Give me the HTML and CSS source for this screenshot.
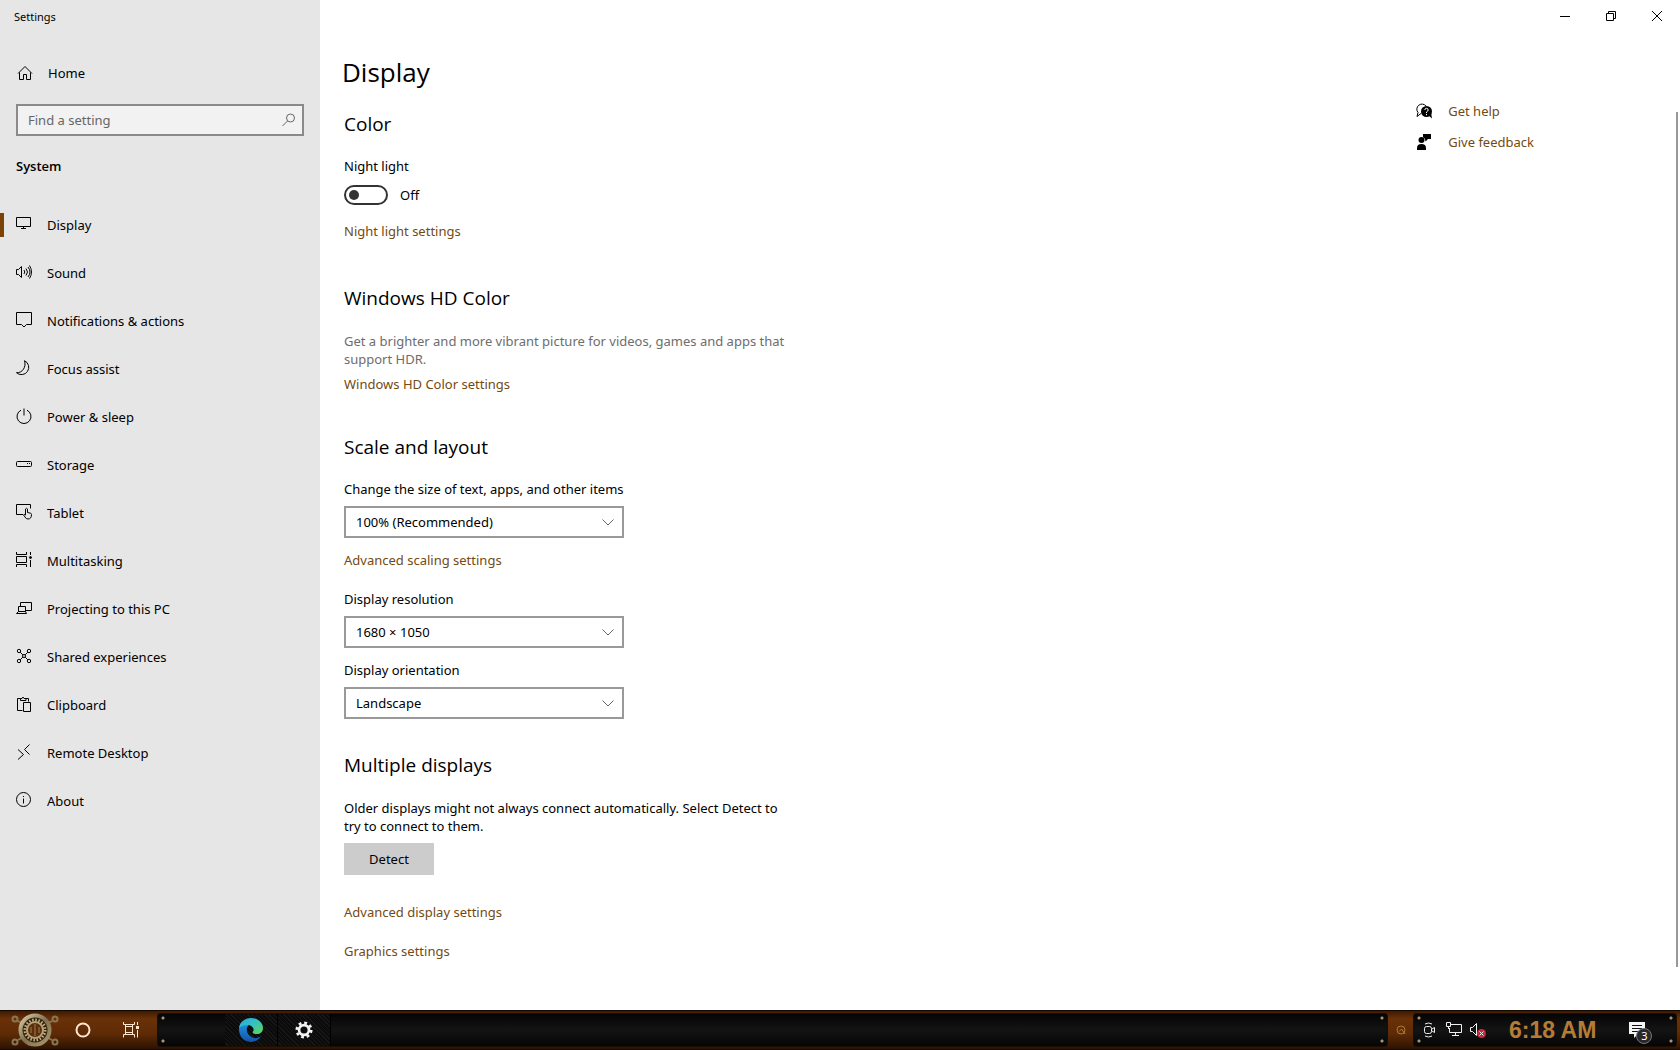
FILE: index.html
```html
<!DOCTYPE html>
<html lang="en">
<head>
    <meta charset="UTF-8">
    <meta name="viewport" content="width=device-width, initial-scale=1.0">
    <title>Settings</title>
    <link rel="stylesheet" href="styles.css">
</head>
<body>

    <div class="window">
        <!-- Sidebar -->
        <aside class="sidebar">
            <div class="app-title">Settings</div>
            <a class="home" href="#">
                <svg class="icon" viewBox="0 0 16 16"><path d="M1 8.500 8 1.500l7 7M2.500 7.500v7h4V9.500h3v5h4v-7"/></svg>
                Home
            </a>
            <div class="search">
                <input type="text" placeholder="Find a setting" aria-label="Find a setting">
                <svg class="icon" viewBox="0 0 16 16"><circle cx="9.500" cy="6" r="4"/><path d="m6.500 9-5 5"/></svg>
            </div>
            <h2 class="group">System</h2>
            <nav class="nav">
                <a class="active" href="#"><svg class="icon" viewBox="0 0 16 16"><path d="M.5 1.500h14v9H.5zM7.500 10.500v2M5 12.500h5"/></svg>Display</a>
                <a href="#"><svg class="icon" viewBox="0 0 16 16"><path d="M.5 5.500h2l3-3v11l-3-3h-2zM8 6q1.500 2 0 4M10 4.500q3 3.500 0 7M12 3q4 5 0 10M13.500 1.500q4 6.500 0 13"/></svg>Sound</a>
                <a href="#"><svg class="icon" viewBox="0 0 16 16"><path d="M.5.500h15v12h-5L8 15l-2.500-2.500h-5z"/></svg>Notifications &amp; actions</a>
                <a href="#"><svg class="icon" viewBox="0 0 16 16"><path d="M8.500.700a7.300 7.300 0 1 1-8 12c6 .5 10-6 8-12z"/></svg>Focus assist</a>
                <a href="#"><svg class="icon" viewBox="0 0 16 16"><path d="M5 2.200a7 7 0 1 0 6 0M8 .5v7"/></svg>Power &amp; sleep</a>
                <a href="#"><svg class="icon" viewBox="0 0 16 16"><rect x=".5" y="5.500" width="15" height="5" rx="1"/><path d="M11 7.500h1M13 7.500h1"/></svg>Storage</a>
                <a href="#"><svg class="icon" viewBox="0 0 16 16"><path d="M7 10.500H.5v-10h14v4M9.500 11V5q1-1.500 2 0v3.500l3 .7q1 .3 1 1.300 0 4.500-3.500 4.500-2 0-3-2l-1.500-2q.5-1.500 2 0z"/></svg>Tablet</a>
                <a href="#"><svg class="icon" viewBox="0 0 16 16"><path d="M.5 0v2.500h10V0M.5 4.500h10v6H.5zM.5 15v-2.500h10V15M14.500 0v3M14.500 8v7"/><circle cx="14.500" cy="5.500" r="1" fill="currentColor"/></svg>Multitasking</a>
                <a href="#"><svg class="icon" viewBox="0 0 16 16"><path d="M4.500 6V2.500h11v8H10M2.500 6.500h7v5h-7zM.5 13.500l2-2h7l1 2z"/></svg>Projecting to this PC</a>
                <a href="#"><svg class="icon" viewBox="0 0 16 16"><circle cx="3" cy="3" r="1.700"/><circle cx="13" cy="3" r="1.700"/><circle cx="3" cy="13" r="1.700"/><circle cx="13" cy="13" r="1.700"/><circle cx="8" cy="8" r="1.500"/><path d="m4.200 4.200 2.700 2.700M11.800 4.200 9.100 6.900M4.200 11.800l2.700-2.700M11.800 11.800 9.100 9.100"/></svg>Shared experiences</a>
                <a href="#"><svg class="icon" viewBox="0 0 16 16"><path d="M6.500 14.500h-5v-12h3M9.500 2.500h3v3M4.500 4.500v-2h1.500q1-3 2 0h2v2zM7.500 6.500h7v9h-7z"/></svg>Clipboard</a>
                <a href="#"><svg class="icon" viewBox="0 0 16 16"><path d="M2 5.500 7.500 10.500 2 15.500M13.500.500l-5 5 5 5"/></svg>Remote Desktop</a>
                <a href="#"><svg class="icon" viewBox="0 0 16 16"><circle cx="7.500" cy="7.500" r="7"/><path d="M7.500 6.500v5M7.500 4v1"/></svg>About</a>
            </nav>
        </aside>

        <!-- Page -->
        <main class="page">
            <div class="caption">
                <button aria-label="Minimize"><svg viewBox="0 0 10 10"><path d="M0 5.500h10"/></svg></button>
                <button aria-label="Restore"><svg viewBox="0 0 10 10"><path d="M.5 2.500h7v7h-7zM2.500 2.500v-2h7v7h-2"/></svg></button>
                <button aria-label="Close"><svg viewBox="0 0 10 10"><path d="m0 0 10 10M10 0 0 10"/></svg></button>
            </div>
            <h1>Display</h1>
            <div class="columns">
                <div class="content">
                    <section>
                        <h2>Color</h2>
                        <label for="night">Night light</label>
                        <div class="toggle">
                            <input type="checkbox" id="night" role="switch">
                            <span>Off</span>
                        </div>
                        <a href="#">Night light settings</a>
                    </section>
                    <section class="hd">
                        <h2>Windows HD Color</h2>
                        <p class="muted">Get a brighter and more vibrant picture for videos, games and apps that support HDR.</p>
                        <a href="#">Windows HD Color settings</a>
                    </section>
                    <section class="scale">
                        <h2>Scale and layout</h2>
                        <label for="size">Change the size of text, apps, and other items</label>
                        <select id="size"><option>100% (Recommended)</option></select>
                        <a href="#">Advanced scaling settings</a>
                        <label for="resolution">Display resolution</label>
                        <select id="resolution"><option>1680 × 1050</option></select>
                        <label for="orientation">Display orientation</label>
                        <select id="orientation"><option>Landscape</option></select>
                    </section>
                    <section class="multiple">
                        <h2>Multiple displays</h2>
                        <p>Older displays might not always connect automatically. Select Detect to try to connect to them.</p>
                        <button class="detect">Detect</button>
                        <a href="#">Advanced display settings</a>
                        <a href="#">Graphics settings</a>
                    </section>
                </div>
                <div class="help">
                    <a href="#">
                        <svg viewBox="0 0 16 16"><path d="M5 10.500 1 13.500l1-4A5 5 0 1 1 10 3" fill="none" stroke="#000"/><circle cx="10.500" cy="8.500" r="5.500"/><path d="m12 12 4 3.500-1-6z"/><path d="M8.800 7q0-1.700 1.700-1.700T12.200 7q0 1-1.700 2v1M10.500 11v1.200" fill="none" stroke="#fff"/></svg>
                        Get help
                    </a>
                    <a href="#">
                        <svg viewBox="0 0 16 16"><path d="M7 0h8v5h-3L9.500 7.500 9 5 7 3z"/><circle cx="5.500" cy="6" r="3"/><path d="M1 16v-2q0-4 4.500-4t4.500 4v2z"/></svg>
                        Give feedback
                    </a>
                </div>
                <div class="scrollbar"></div>
            </div>
        </main>
    </div>

    <!-- Taskbar -->
    <footer class="taskbar">
        <button class="start" aria-label="Start">
            <svg viewBox="0 0 48 34">
                <defs>
                    <linearGradient id="brass" x1="0" y1="0" x2="1" y2="1"><stop offset="0" stop-color="#d8cba8"/><stop offset=".5" stop-color="#80704e"/><stop offset="1" stop-color="#a89870"/></linearGradient>
                </defs>
                <g stroke="#8a7650" stroke-width="2"><path d="m7 8 34 19M7 27 41 8"/><circle cx="4" cy="6" r="2.500"/><circle cx="44" cy="6" r="2.500"/><circle cx="4" cy="29" r="2.500"/><circle cx="44" cy="29" r="2.500"/></g>
                <circle cx="24" cy="17" r="14.500" fill="#33200f" stroke="url(#brass)" stroke-width="4"/>
                <circle cx="24" cy="17" r="10" stroke="#c2b184" stroke-width="3" stroke-dasharray="1.500 1.640"/>
                <circle cx="24" cy="17" r="8" fill="#56300f" stroke="#b8a274" stroke-width="2"/>
                <path d="M24 11v12M20 14v6M28 14v6" stroke="#b07840"/>
            </svg>
        </button>
        <button class="cortana" aria-label="Search"><svg viewBox="0 0 16 16"><circle cx="8" cy="8" r="6.500"/></svg></button>
        <button class="taskview" aria-label="Task View"><svg viewBox="0 0 16 16"><path d="M.5 0v2.500h11V0M2.500 2.500v10M9.500 2.500v10M2 4.500h8M2 10.500h8M.5 15.500v-3h11v3M14.500 0v3M14.500 8v7.500"/><path d="M13 4h3v3h-3z" class="solid"/></svg></button>
        <div class="apps panel">
            <button class="app" aria-label="Edge">
                <svg viewBox="0 0 24 24">
                    <defs>
                        <linearGradient id="wave" x1="0" y1="0" x2="1" y2="1"><stop offset="0" stop-color="#2aa8e0"/><stop offset=".5" stop-color="#35c1c0"/><stop offset="1" stop-color="#63d84a"/></linearGradient>
                        <linearGradient id="deep" x1="0" y1="0" x2="0" y2="1"><stop offset="0" stop-color="#1f8fe0"/><stop offset="1" stop-color="#1253a8"/></linearGradient>
                    </defs>
                    <path fill="url(#deep)" d="M0 11C1 6 6 5 10 7c-3 2-3 7 0 10 4 4 8 4 12 1-3 5-8 7-13 5.500C3 22 0 17 0 11z"/>
                    <path fill="url(#wave)" d="M0 11C0 4 6 0 12 0c7 0 12 5 12 10 0 4-3 6-6 6-4 0-5-1-4-2.500C16 11 13 7 9 7c-4 0-8 1-9 4z"/>
                </svg>
            </button>
            <button class="app open" aria-label="Settings">
                <svg viewBox="0 0 20 20"><circle cx="10" cy="10" r="5.500" stroke="#f2f2f2" stroke-width="3"/><circle cx="10" cy="10" r="8" stroke="#f2f2f2" stroke-width="3" stroke-dasharray="3.140 3.140"/></svg>
            </button>
        </div>
        <button class="chevron" aria-label="Show hidden icons"><svg viewBox="0 0 12 12"><circle cx="6" cy="6" r="4"/><path d="M4 7.500 6.500 5 10 10"/></svg></button>
        <div class="tray panel">
            <svg class="tray-icon" viewBox="0 0 16 16"><rect x="2.500" y="4.500" width="7" height="7" rx="2"/><path d="m10 7 2.500-1.500v5L10 9M3 2q3.500-2 7 0M3 14q3.500 2 7 0"/></svg>
            <svg class="tray-icon" viewBox="0 0 16 16"><path d="M5 2.500h10.500v8H3.500V6M9.500 10.500v3M6 13.500h7M.5.500h4v4h-4zM2.500 4.500V7"/></svg>
            <svg class="tray-icon" viewBox="0 0 16 16"><path d="M.5 5.500h2l4-4v12l-4-4h-2z"/><circle cx="11.500" cy="11.500" r="4.500" class="mute"/><path d="m9.500 9.500 4 4M13.500 9.500l-4 4"/></svg>
            <time>6:18 AM</time>
            <button class="notify" aria-label="Notifications">
                <svg viewBox="0 0 16 16"><path fill="#f4f4f4" d="M0 0h16v12H9l-4 4v-4H0z"/><path stroke="#111" d="M3 3.500h10M3 6.500h10M3 9.500h6"/></svg>
                <span class="badge">3</span>
            </button>
        </div>
    </footer>

</body>
</html>
```
FILE: styles.css
```css
* {
    box-sizing: border-box;
}

body {
    margin: 0;
    min-height: 100vh;
    display: flex;
    flex-direction: column;
    font-family: "Noto Sans", "Open Sans", sans-serif;
    font-size: 13px;
    line-height: 18px;
    color: #000;
    background: #fff;
}

h1, h2, p {
    margin: 0;
    font-weight: normal;
}

a {
    color: #744a10;
    text-decoration: none;
}

button {
    padding: 0;
    border: 0;
    background: none;
    font: inherit;
    color: inherit;
}

.window {
    flex: 1;
    display: flex;
}

/* Sidebar */
.sidebar {
    width: 320px;
    background: #e6e6e6;
}

.sidebar a {
    color: #000;
}

.app-title {
    padding: 8px 14px;
    font-size: 11px;
}

.icon {
    width: 16px;
    height: 16px;
    fill: none;
    stroke: currentColor;
    flex: none;
}

.home {
    display: flex;
    align-items: center;
    gap: 15px;
    height: 40px;
    margin-top: 19px;
    padding-left: 17px;
}

.search {
    display: flex;
    align-items: center;
    height: 32px;
    margin: 11px 16px 0;
    padding: 0 5px 0 10px;
    border: 2px solid #8a8a8a;
    background: #f2f2f2;
    color: #666;
}

.search input {
    flex: 1;
    min-width: 0;
    padding: 0;
    border: 0;
    outline: 0;
    background: none;
    font: inherit;
}

.search input::placeholder {
    color: #666;
    opacity: 1;
}

.sidebar .group {
    margin: 21px 16px 26px;
    font-family: "Open Sans", sans-serif;
    font-size: 13px;
    font-weight: 600;
    line-height: 18px;
}

.nav a {
    display: flex;
    align-items: center;
    gap: 15px;
    height: 48px;
    padding-left: 16px;
}

.nav .icon {
    margin-bottom: 2px;
}

.nav .active {
    padding-left: 0;
}

.nav .active::before {
    content: "";
    width: 4px;
    height: 24px;
    margin-right: -3px;
    background: #7c4307;
}

/* Page */
.page {
    flex: 1;
    display: flex;
    flex-direction: column;
}

.caption {
    display: flex;
    justify-content: flex-end;
    height: 32px;
}

.caption button {
    width: 46px;
}

.caption svg {
    width: 10px;
    height: 10px;
    fill: none;
    stroke: #000;
}

h1, h2 {
    font-family: "Open Sans", sans-serif;
}

h1 {
    margin: 20px 0 0 22px;
    font-size: 26px;
    line-height: 40px;
}

h2 {
    margin-bottom: 19px;
    font-size: 19px;
    line-height: 28px;
}

.columns {
    flex: 1;
    display: flex;
    padding-left: 24px;
}

.content {
    width: 450px;
    padding: 18px 0 20px;
}

.content label,
.content section > a {
    display: block;
    width: fit-content;
}

.toggle {
    display: flex;
    align-items: center;
    gap: 12px;
    margin: 10px 0 17px;
}

.toggle input {
    appearance: none;
    width: 44px;
    height: 20px;
    margin: 0;
    padding: 3px;
    border: 2px solid #333;
    border-radius: 10px;
}

.toggle input::before {
    content: "";
    display: block;
    width: 10px;
    height: 10px;
    border-radius: 50%;
    background: #333;
}

.toggle input:checked::before {
    margin-left: auto;
}

.hd {
    margin-top: 44px;
}

.hd h2,
.multiple h2 {
    margin-bottom: 20px;
}

.hd p {
    margin-bottom: 7px;
}

.muted {
    color: #6d6d6d;
}

.scale {
    margin-top: 40px;
}

select {
    appearance: none;
    display: block;
    width: 280px;
    height: 32px;
    margin: 8px 0 13px;
    padding: 0 10px;
    border: 2px solid #999;
    border-radius: 0;
    background: #fff url("data:image/svg+xml,%3Csvg xmlns='http://www.w3.org/2000/svg' viewBox='0 0 12 7' fill='none' stroke='%23666'%3E%3Cpath d='m.5.5 5.500 5.500 5.500-5.500'/%3E%3C/svg%3E") no-repeat right 8px center / 12px 7px;
    font: inherit;
    color: #000;
}

.scale a {
    margin-bottom: 21px;
}

.multiple {
    margin-top: 32px;
}

.detect {
    display: block;
    width: 90px;
    height: 32px;
    margin: 8px 0 28px;
    background: #ccc;
}

.multiple a + a {
    margin-top: 21px;
}

.help {
    margin-left: auto;
    margin-right: 142px;
    padding-top: 10px;
}

.help a {
    display: flex;
    align-items: center;
    gap: 16px;
    margin-bottom: 13px;
}

.help svg {
    width: 16px;
    height: 16px;
}

.scrollbar {
    width: 2px;
    margin: 20px 2px 43px 0;
    background: #999;
}

/* Taskbar */
.taskbar {
    display: flex;
    align-items: center;
    height: 40px;
    border: 1px solid #140800;
    border-width: 1px 0;
    background: linear-gradient(#3c1a04, #6a3108 20%, #5e2b06 60%, #2c1202);
}

.taskbar svg {
    display: block;
    fill: none;
}

.start svg {
    width: 48px;
    height: 34px;
}

.start {
    margin-left: 11px;
}

.cortana,
.taskview {
    width: 48px;
}

.cortana svg,
.taskview svg {
    width: 16px;
    height: 16px;
    margin: 0 auto;
    stroke: #ffe6d0;
}

.cortana svg {
    stroke-width: 2;
}

.taskbar .solid {
    fill: #ffe6d0;
    stroke: none;
}

.panel {
    display: flex;
    align-items: center;
    height: 34px;
    border: 1px solid #1c0d03;
    border-radius: 3px;
    background:
        radial-gradient(circle at 5px 4px, #a89478 1px, transparent 2px),
        radial-gradient(circle at 5px 27px, #a89478 1px, transparent 2px),
        radial-gradient(circle at calc(100% - 5px) 4px, #a89478 1px, transparent 2px),
        radial-gradient(circle at calc(100% - 5px) 27px, #a89478 1px, transparent 2px),
        linear-gradient(#050505, #141414 50%, #050505);
}

.apps {
    flex: 1;
    margin-left: 2px;
    padding-left: 67px;
}

.app {
    width: 53px;
    height: 32px;
    border-right: 1px solid #000;
    background: repeating-linear-gradient(45deg, #0b0b0b 0 2px, #171717 2px 3px);
}

.app svg {
    width: 24px;
    height: 24px;
    margin: 0 auto;
}

.open svg {
    width: 18px;
    height: 18px;
}

.chevron {
    width: 25px;
}

.chevron svg {
    width: 12px;
    height: 12px;
    margin: 0 auto;
    stroke: #b07a34;
}

.tray {
    width: 264px;
    margin-right: 3px;
    padding-left: 8px;
}

.tray-icon {
    width: 16px;
    height: 16px;
    margin-right: 8px;
    stroke: #f0f0f0;
}

.taskbar .mute {
    fill: #c8283c;
    stroke: none;
}

.tray time {
    margin-left: 15px;
    font: bold 23px/32px "Liberation Sans", sans-serif;
    color: #b67c36;
}

.notify {
    position: relative;
    margin-left: 33px;
}

.notify svg {
    width: 16px;
    height: 16px;
}

.badge {
    position: absolute;
    left: 7px;
    top: 6px;
    width: 16px;
    height: 16px;
    border: 1px solid #777;
    border-radius: 50%;
    background: #26282c;
    font-size: 11px;
    line-height: 14px;
    color: #fff;
}
```
